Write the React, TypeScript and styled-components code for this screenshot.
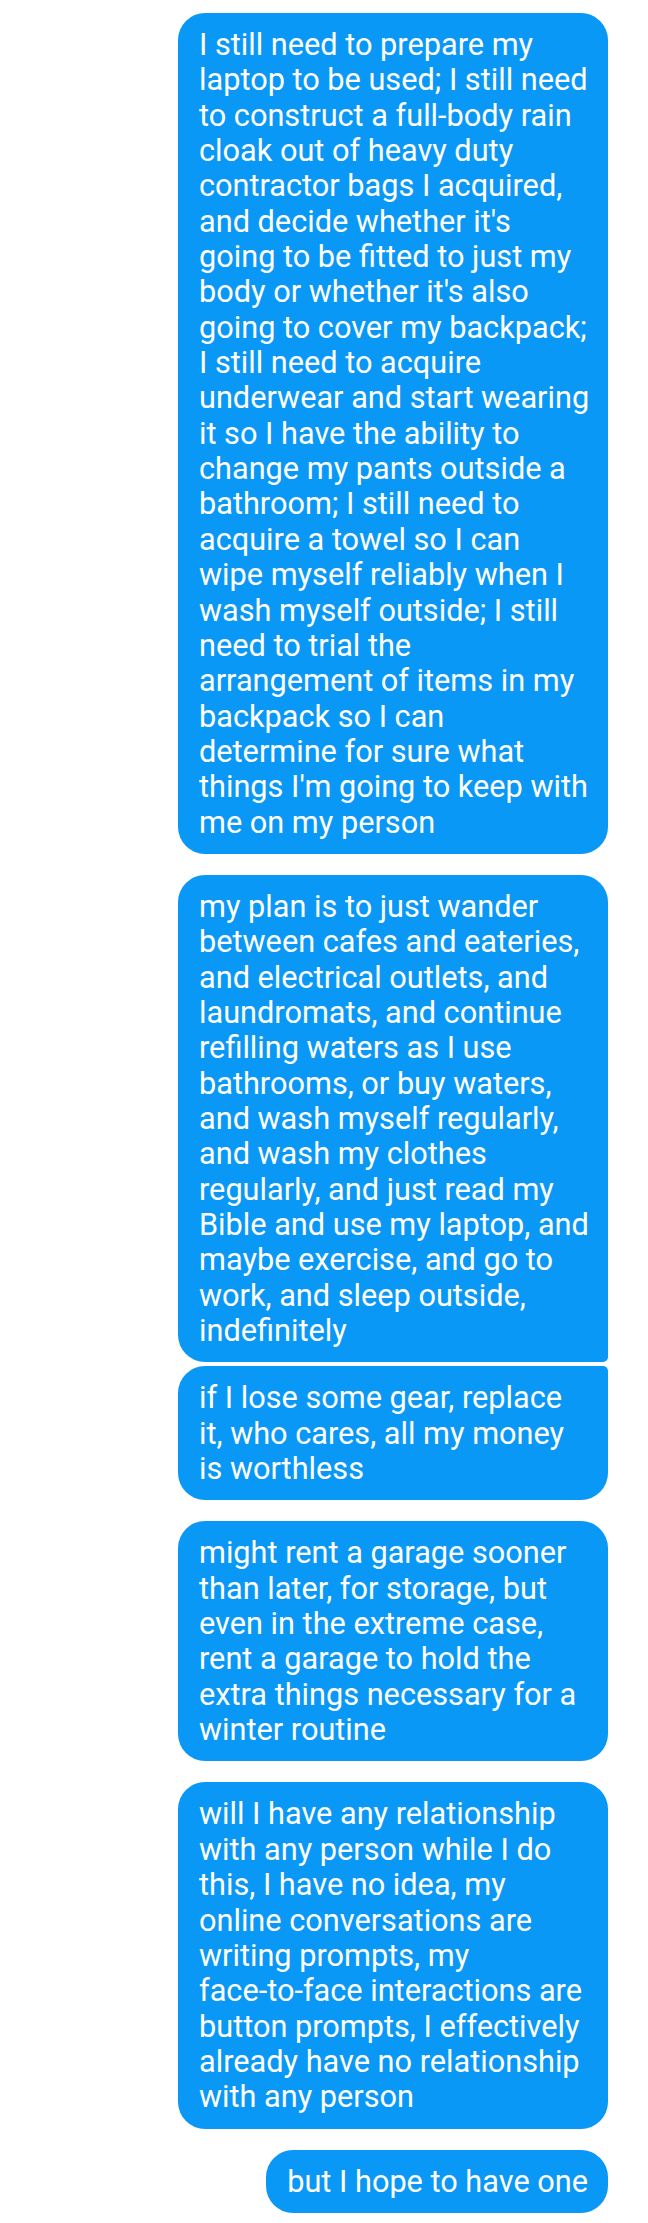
import React from "react";
import styled, { createGlobalStyle } from "styled-components";

const Global = createGlobalStyle`
  html, body { margin: 0; padding: 0; background: #ffffff; }
  body { font-family: Roboto, "Noto Sans", Arial, sans-serif; }
`;

const Thread = styled.div`
  width: 648px;
  min-height: 2223px;
  box-sizing: border-box;
  padding: 13px 40px 12px 0;
  display: flex;
  flex-direction: column;
  align-items: flex-end;
  background: #ffffff;
`;

const Group = styled.div<{ $last?: boolean }>`
  display: flex;
  flex-direction: column;
  align-items: flex-end;
  gap: 4px;
  margin-bottom: ${(p) => (p.$last ? "0" : "21px")};
`;

type Pos = "single" | "first" | "last";

const Bubble = styled.div<{ $pos: Pos; $wide: boolean }>`
  box-sizing: border-box;
  width: ${(p) => (p.$wide ? "430px" : "auto")};
  padding: 14px 20px 14px 21px;
  background: #0a98f7;
  color: #ffffff;
  font-family: Roboto, "Noto Sans", Arial, sans-serif;
  font-size: 30.7px;
  line-height: 35.35px;
  border-radius: ${(p) =>
    p.$pos === "first"
      ? "27px 27px 5px 27px"
      : p.$pos === "last"
      ? "27px 5px 27px 27px"
      : "27px"};
`;

const Line = styled.span`
  display: block;
  white-space: nowrap;
`;

const groups: { lines: string[]; pos: Pos }[][] = [
  [
    {
      pos: "single",
      lines: [
        "I still need to prepare my",
        "laptop to be used; I still need",
        "to construct a full-body rain",
        "cloak out of heavy duty",
        "contractor bags I acquired,",
        "and decide whether it's",
        "going to be fitted to just my",
        "body or whether it's also",
        "going to cover my backpack;",
        "I still need to acquire",
        "underwear and start wearing",
        "it so I have the ability to",
        "change my pants outside a",
        "bathroom; I still need to",
        "acquire a towel so I can",
        "wipe myself reliably when I",
        "wash myself outside; I still",
        "need to trial the",
        "arrangement of items in my",
        "backpack so I can",
        "determine for sure what",
        "things I'm going to keep with",
        "me on my person",
      ],
    },
  ],
  [
    {
      pos: "first",
      lines: [
        "my plan is to just wander",
        "between cafes and eateries,",
        "and electrical outlets, and",
        "laundromats, and continue",
        "refilling waters as I use",
        "bathrooms, or buy waters,",
        "and wash myself regularly,",
        "and wash my clothes",
        "regularly, and just read my",
        "Bible and use my laptop, and",
        "maybe exercise, and go to",
        "work, and sleep outside,",
        "indefinitely",
      ],
    },
    {
      pos: "last",
      lines: [
        "if I lose some gear, replace",
        "it, who cares, all my money",
        "is worthless",
      ],
    },
  ],
  [
    {
      pos: "single",
      lines: [
        "might rent a garage sooner",
        "than later, for storage, but",
        "even in the extreme case,",
        "rent a garage to hold the",
        "extra things necessary for a",
        "winter routine",
      ],
    },
  ],
  [
    {
      pos: "single",
      lines: [
        "will I have any relationship",
        "with any person while I do",
        "this, I have no idea, my",
        "online conversations are",
        "writing prompts, my",
        "face-to-face interactions are",
        "button prompts, I effectively",
        "already have no relationship",
        "with any person",
      ],
    },
  ],
  [{ pos: "single", lines: ["but I hope to have one"] }],
];

export default function App() {
  return (
    <>
      <Global />
      <Thread>
        {groups.map((g, i) => (
          <Group key={i} $last={i === groups.length - 1}>
            {g.map((m, j) => (
              <Bubble key={j} $pos={m.pos} $wide={m.lines.length > 1}>
                {m.lines.map((l, k) => (
                  <Line key={k}>{l}</Line>
                ))}
              </Bubble>
            ))}
          </Group>
        ))}
      </Thread>
    </>
  );
}
